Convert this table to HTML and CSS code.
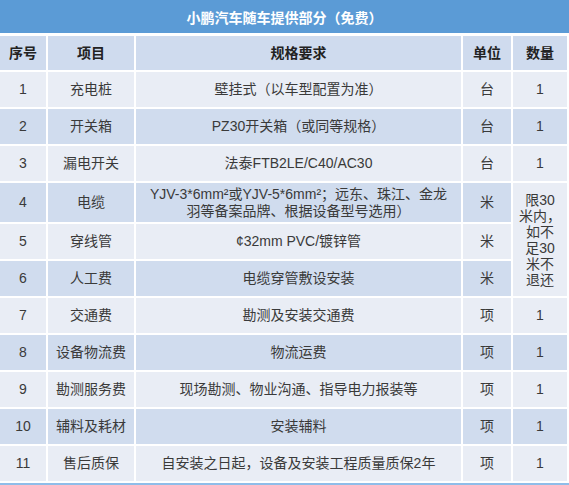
FILE: index.html
```html
<!DOCTYPE html>
<html lang="zh-CN">
<head>
<meta charset="utf-8">
<title>小鹏汽车随车提供部分（免费）</title>
<link rel="stylesheet" href="styles.css">
</head>
<body>
<div class="sheet">
  <div class="title">小鹏汽车随车提供部分（免费）</div>
  <table class="grid">
    <colgroup>
      <col class="c-no"><col class="c-item"><col class="c-spec"><col class="c-unit"><col class="c-qty">
    </colgroup>
    <thead>
      <tr class="head">
        <th>序号</th><th>项目</th><th>规格要求</th><th>单位</th><th>数量</th>
      </tr>
    </thead>
    <tbody>
      <tr class="odd"><td>1</td><td>充电桩</td><td>壁挂式（以车型配置为准）</td><td>台</td><td>1</td></tr>
      <tr class="even"><td>2</td><td>开关箱</td><td>PZ30开关箱（或同等规格）</td><td>台</td><td>1</td></tr>
      <tr class="odd"><td>3</td><td>漏电开关</td><td>法泰FTB2LE/C40/AC30</td><td>台</td><td>1</td></tr>
      <tr class="even tall"><td>4</td><td>电缆</td><td class="two">YJV-3*6mm²或YJV-5*6mm²；远东、珠江、金龙<br>羽等备案品牌、根据设备型号选用）</td><td>米</td><td rowspan="3" class="merged">限30<br>米内，<br>如不<br>足30<br>米不<br>退还</td></tr>
      <tr class="odd"><td>5</td><td>穿线管</td><td>¢32mm PVC/镀锌管</td><td>米</td></tr>
      <tr class="even"><td>6</td><td>人工费</td><td>电缆穿管敷设安装</td><td>米</td></tr>
      <tr class="odd"><td>7</td><td>交通费</td><td>勘测及安装交通费</td><td>项</td><td>1</td></tr>
      <tr class="even"><td>8</td><td>设备物流费</td><td>物流运费</td><td>项</td><td>1</td></tr>
      <tr class="odd"><td>9</td><td>勘测服务费</td><td>现场勘测、物业沟通、指导电力报装等</td><td>项</td><td>1</td></tr>
      <tr class="even"><td>10</td><td>辅料及耗材</td><td>安装辅料</td><td>项</td><td>1</td></tr>
      <tr class="odd"><td>11</td><td>售后质保</td><td>自安装之日起，设备及安装工程质量质保2年</td><td>项</td><td>1</td></tr>
    </tbody>
  </table>
  <div class="foot-line"></div>
</div>
</body>
</html>
```
FILE: styles.css
```css
* { box-sizing: border-box; }
html, body { margin: 0; padding: 0; background: #ffffff; }
body {
  font-family: "Liberation Sans", "Noto Sans CJK SC", sans-serif;
  color: #3a3a3a;
}
.sheet { width: 569px; }
.title {
  height: 33px;
  background: #5b9bd6;
  color: #ffffff;
  font-weight: bold;
  font-size: 14px;
  display: flex;
  align-items: center;
  justify-content: center;
  margin-bottom: 3px;
}
.grid {
  width: 569px;
  table-layout: fixed;
  border-collapse: separate;
  border-spacing: 0;
  font-size: 14px;
}
.c-no { width: 48px; }
.c-item { width: 88px; }
.c-spec { width: 327px; }
.c-unit { width: 50px; }
.c-qty { width: 56px; }
.grid th, .grid td {
  border-right: 2px solid #ffffff;
  border-bottom: 2px solid #ffffff;
  padding: 0;
  text-align: center;
  vertical-align: middle;
  height: 37px;
  line-height: 17px;
}
.grid th {
  height: 36px;
  font-weight: bold;
  color: #222222;
  background: #cfdbee;
}
.odd td { background: #e9edf5; }
.even td { background: #d0dcee; }
.tall td { height: 41px; }
.grid td.merged {
  background: #e9edf5;
  line-height: 16px;
  height: auto;
}
.foot-line {
  height: 2px;
  background: #8fbde9;
}
```
